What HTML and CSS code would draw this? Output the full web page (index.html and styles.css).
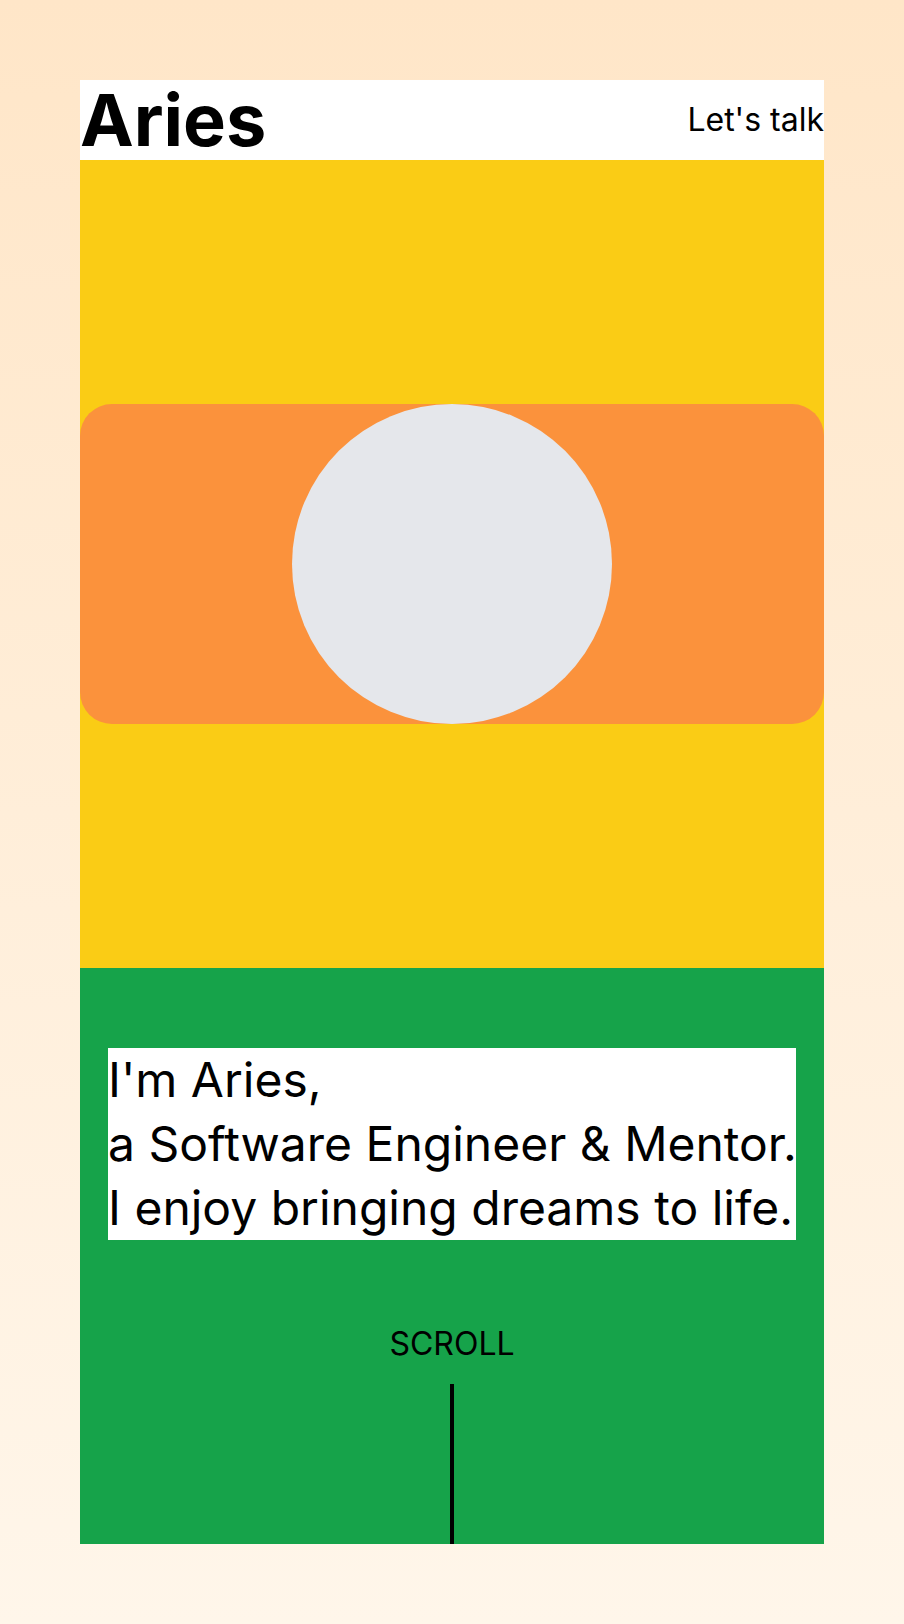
FILE: index.html
```html
<!DOCTYPE html>
<html lang="en">
<head>
<meta charset="utf-8">
<title>Aries</title>
<link rel="stylesheet" href="styles.css">
</head>
<body>
<div class="page">
  <header class="header">
    <div class="logo">Aries</div>
    <a class="talk" href="#">Let's talk</a>
  </header>
  <section class="hero">
    <div class="banner">
      <div class="avatar"></div>
    </div>
  </section>
  <section class="intro">
    <h1 class="intro-text">I'm Aries,<br>a Software Engineer &amp; Mentor.<br>I enjoy bringing dreams to life.</h1>
    <div class="scroll">
      <span class="scroll-label">SCROLL</span>
      <span class="scroll-line"></span>
    </div>
  </section>
</div>
</body>
</html>
```

FILE: styles.css
```css
* { box-sizing: border-box; }
html, body { margin: 0; padding: 0; }
body {
  font-family: Inter, "Noto Sans", sans-serif;
  background: linear-gradient(to bottom, #ffe6c8 0%, #fff6ea 100%);
  min-height: 1624px;
  padding: 80px;
  color: #000;
}
.page {
  display: flex;
  flex-direction: column;
}
.header {
  height: 80px;
  background: #ffffff;
  display: flex;
  justify-content: space-between;
  align-items: center;
}
.logo {
  font-size: 72px;
  font-weight: 700;
  line-height: 72px;
}
.talk {
  font-size: 32px;
  line-height: 40px;
  color: #000;
  text-decoration: none;
}
.hero {
  height: 808px;
  background: #facc15;
  display: flex;
  align-items: center;
}
.banner {
  width: 100%;
  height: 320px;
  background: #fb923c;
  border-radius: 32px;
  display: flex;
  justify-content: center;
}
.avatar {
  width: 320px;
  height: 320px;
  border-radius: 50%;
  background: #e5e7eb;
}
.intro {
  background: #16a34a;
  padding: 80px 28px 0;
  display: flex;
  flex-direction: column;
}
.intro-text {
  margin: 0;
  background: #ffffff;
  font-size: 48px;
  font-weight: 400;
  line-height: 64px;
  white-space: nowrap;
}
.scroll {
  margin-top: 80px;
  display: flex;
  flex-direction: column;
  align-items: center;
}
.scroll-label {
  font-size: 32px;
  line-height: 48px;
}
.scroll-line {
  margin-top: 16px;
  width: 4px;
  height: 160px;
  background: #000;
}
```
